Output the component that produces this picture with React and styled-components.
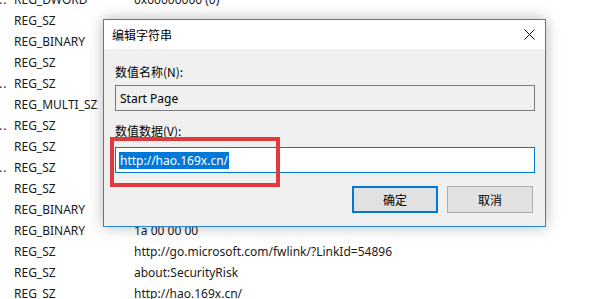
import React from "react";
import styled, { createGlobalStyle } from "styled-components";

const Global = createGlobalStyle`
  html, body { margin: 0; padding: 0; background: #fff; }
  body { width: 603px; height: 299px; overflow: hidden; position: relative;
    font-family: "Noto Sans", "Noto Sans CJK SC", sans-serif; }
`;

const Stage = styled.div`
  position: relative;
  width: 603px;
  height: 299px;
  overflow: hidden;
  background: #fff;
`;

const List = styled.div`
  display: flex;
  flex-direction: column;
  margin-top: -11px;
`;

const Row = styled.div`
  display: grid;
  grid-template-columns: 14px 120px 1fr;
  height: 21px;
  align-items: center;
  font-size: 12px;
  color: #1a1a1a;
  white-space: nowrap;
`;

const Dots = styled.span`
  overflow: hidden;
  font-size: 12px;
  letter-spacing: 1px;
  margin-left: ${p => (p.$n === 1 ? "-3px" : "-1px")};
`;

const Cell = styled.span``;

const Dialog = styled.div`
  position: absolute;
  left: 103px;
  top: 19px;
  width: 441px;
  height: 206px;
  border: 1px solid #2a86cf;
  background: #f0f0f0;
  box-shadow: 0 0 14px rgba(0, 0, 0, 0.28);
  display: flex;
  flex-direction: column;
  font-family: "Noto Sans CJK SC", "Noto Sans", sans-serif;
  font-size: 12px;
  color: #000;
`;

const TitleBar = styled.div`
  height: 29px;
  background: #fff;
  display: flex;
  align-items: center;
  justify-content: space-between;
  padding: 0 10px 0 8px;
`;

const Title = styled.span`
  font-size: 12px;
`;

const Body = styled.div`
  display: flex;
  flex-direction: column;
  padding: 15px 10px 0 11px;
`;

const Label = styled.div`
  height: 16px;
  line-height: 16px;
  margin-top: ${p => p.$mt || 0}px;
`;

const Field = styled.div`
  height: ${p => p.$h}px;
  box-sizing: border-box;
  border: 1px solid ${p => (p.$focus ? "#0078d7" : "#7a7a7a")};
  background: ${p => (p.$focus ? "#fff" : "#f0f0f0")};
  display: flex;
  align-items: center;
  padding-left: ${p => (p.$focus ? 3 : 4)}px;
  margin-top: ${p => p.$mt}px;
  font-family: "Noto Sans", "Noto Sans CJK SC", sans-serif;
  font-size: 12px;
`;

const Selected = styled.span`
  background: #0078d7;
  color: #fff;
  line-height: 17px;
  padding: 0 1px;
`;

const Buttons = styled.div`
  display: flex;
  justify-content: flex-end;
  gap: 9px;
  margin-top: 13px;
  padding-right: 2px;
`;

const Button = styled.div`
  width: 86px;
  height: 27px;
  box-sizing: border-box;
  display: flex;
  align-items: center;
  justify-content: center;
  background: #e1e1e1;
  border: ${p => (p.$primary ? "2px solid #0078d7" : "1px solid #adadad")};
  font-size: 12px;
`;

const Highlight = styled.div`
  position: absolute;
  left: 110px;
  top: 137px;
  width: 170px;
  height: 50px;
  box-sizing: border-box;
  border: 4px solid #e0393e;
  pointer-events: none;
`;

const rows = [
  ["..", "REG_DWORD", "0x00000000 (0)"],
  ["", "REG_SZ", ""],
  [".", "REG_BINARY", ""],
  ["", "REG_SZ", ""],
  ["..", "REG_SZ", ""],
  ["", "REG_MULTI_SZ", ""],
  ["..", "REG_SZ", ""],
  [".", "REG_SZ", ""],
  ["..", "REG_SZ", ""],
  ["", "REG_SZ", ""],
  [".", "REG_BINARY", ""],
  [".", "REG_BINARY", "1a 00 00 00"],
  ["", "REG_SZ", "http://go.microsoft.com/fwlink/?LinkId=54896"],
  ["", "REG_SZ", "about:SecurityRisk"],
  ["", "REG_SZ", "http://hao.169x.cn/"],
];

const CloseIcon = () => (
  <svg width="11" height="11" viewBox="0 0 11 11">
    <path d="M0.5 0.5 L10.5 10.5 M10.5 0.5 L0.5 10.5" stroke="#111" strokeWidth="1" />
  </svg>
);

export default function App() {
  return (
    <Stage>
      <Global />
      <List>
        {rows.map((r, i) => (
          <Row key={i}>
            <Dots $n={r[0].length}>{r[0]}</Dots>
            <Cell>{r[1]}</Cell>
            <Cell>{r[2]}</Cell>
          </Row>
        ))}
      </List>
      <Dialog>
        <TitleBar>
          <Title>编辑字符串</Title>
          <CloseIcon />
        </TitleBar>
        <Body>
          <Label>数值名称(N):</Label>
          <Field $h={26} $mt={5}>Start Page</Field>
          <Label $mt={12}>数值数据(V):</Label>
          <Field $h={26} $mt={8} $focus>
            <Selected>http://hao.169x.cn/</Selected>
          </Field>
          <Buttons>
            <Button $primary>确定</Button>
            <Button>取消</Button>
          </Buttons>
        </Body>
      </Dialog>
      <Highlight />
    </Stage>
  );
}
